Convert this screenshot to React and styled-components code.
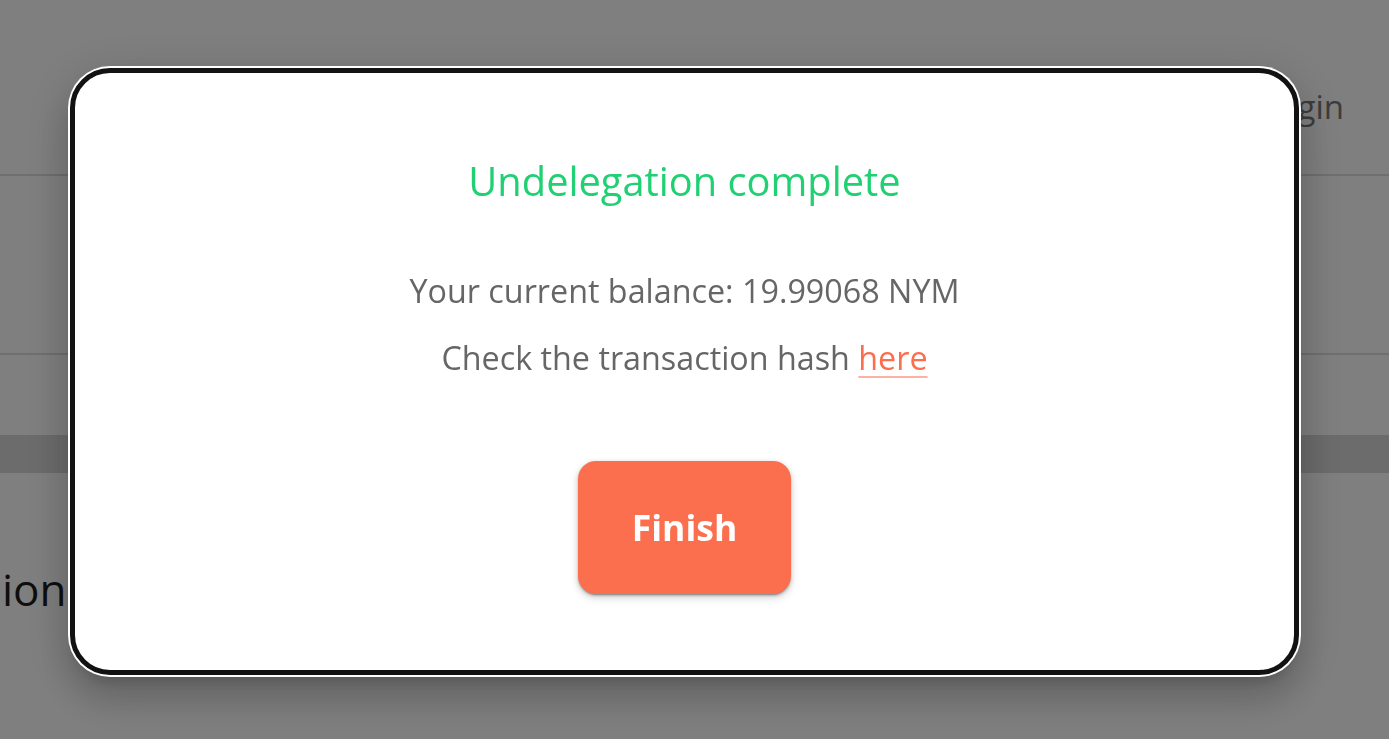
import styled, { createGlobalStyle } from 'styled-components';

const GlobalStyle = createGlobalStyle`
  html, body {
    margin: 0;
    padding: 0;
    background: #ffffff;
    font-family: "Open Sans", "Noto Sans", sans-serif;
    overflow: hidden;
  }
`;

const Page = styled.div`
  width: 1389px;
  height: 739px;
  display: flex;
  flex-direction: column;
  background: #ffffff;
`;

const Header = styled.header`
  height: 176px;
  border-bottom: 2px solid #dedede;
  display: flex;
  justify-content: flex-end;
  align-items: flex-start;
  padding: 82px 45px 0 0;
  box-sizing: border-box;
`;

const HeaderLink = styled.span`
  font-size: 33px;
  color: #787878;
  line-height: 50px;
`;

const Section = styled.div`
  height: ${props => props.h}px;
  border-bottom: ${props => props.line ? '2px solid #dedede' : 'none'};
  box-sizing: border-box;
`;

const Band = styled.div`
  height: 38px;
  background: #d8d8d8;
`;

const PageTitle = styled.h2`
  margin: 86px 0 0 2px;
  font-size: 44px;
  font-weight: 400;
  line-height: 60px;
  color: #1c1c1c;
`;

const Backdrop = styled.div`
  position: fixed;
  inset: 0;
  background: rgba(0, 0, 0, 0.5);
  display: flex;
  align-items: flex-start;
  padding: 68px 0 0 70px;
  box-sizing: border-box;
`;

const Modal = styled.div`
  width: 1229px;
  height: 607px;
  box-sizing: border-box;
  background: #ffffff;
  border: 5px solid #121212;
  border-radius: 40px;
  box-shadow: 0 0 0 2px #ffffff,
    0 11px 15px -7px rgba(0, 0, 0, 0.2),
    0 24px 38px 3px rgba(0, 0, 0, 0.14),
    0 9px 46px 8px rgba(0, 0, 0, 0.12);
  display: flex;
  flex-direction: column;
  align-items: center;
  padding-top: 83px;
`;

const Title = styled.h1`
  margin: 0;
  font-size: 39.8px;
  font-weight: 500;
  line-height: 50px;
  color: #21d072;
`;

const Info = styled.p`
  margin: ${props => props.first ? '51px' : '0'} 0 0;
  font-size: 32.3px;
  line-height: 67px;
  color: #666666;
`;

const HashLink = styled.a`
  color: #fb6e4e;
  text-decoration: underline;
  text-decoration-color: #fdb3a3;
  text-underline-offset: 6px;
  text-decoration-thickness: 2px;
`;

const FinishButton = styled.button`
  margin-top: 70px;
  width: 213px;
  height: 133px;
  border: none;
  border-radius: 18px;
  background: #fb6e4e;
  color: #ffffff;
  font-family: "Open Sans", "Noto Sans", sans-serif;
  font-size: 35.5px;
  font-weight: 700;
  padding-bottom: 2px;
  box-shadow: 0 3px 1px -2px rgba(0, 0, 0, 0.2),
    0 2px 2px 0 rgba(0, 0, 0, 0.14),
    0 1px 5px 0 rgba(0, 0, 0, 0.12),
    0 4px 8px rgba(0, 0, 0, 0.15);
  cursor: pointer;
`;

export default function App() {
  return (
    <>
      <GlobalStyle />
      <Page>
        <Header>
          <HeaderLink>Login</HeaderLink>
        </Header>
        <Section h={179} line />
        <Section h={80} />
        <Band />
        <PageTitle>ion</PageTitle>
      </Page>
      <Backdrop>
        <Modal>
          <Title>Undelegation complete</Title>
          <Info first>Your current balance: 19.99068 NYM</Info>
          <Info>
            Check the transaction hash <HashLink href="#">here</HashLink>
          </Info>
          <FinishButton>Finish</FinishButton>
        </Modal>
      </Backdrop>
    </>
  );
}
